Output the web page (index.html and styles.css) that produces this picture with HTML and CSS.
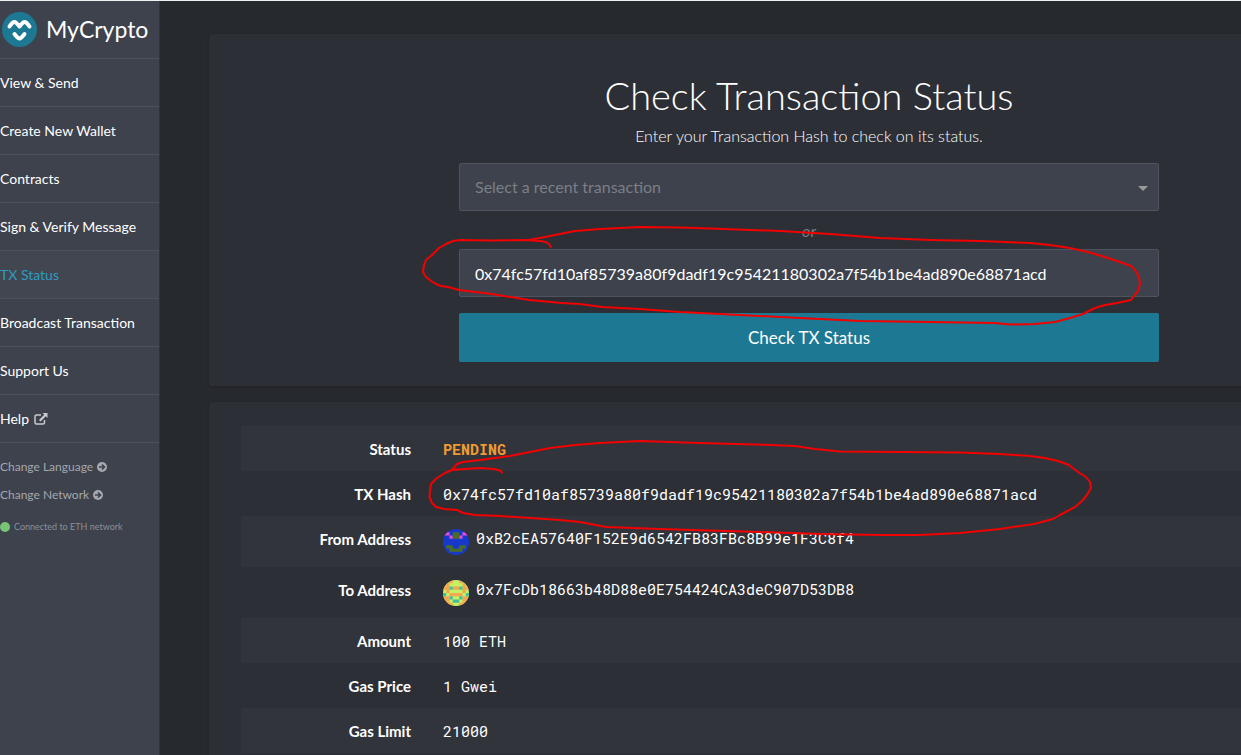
FILE: index.html
```html
<!DOCTYPE html>
<html lang="en">
<head>
<meta charset="utf-8">
<title>MyCrypto - TX Status</title>
<link rel="stylesheet" href="styles.css">
</head>
<body>
<div class="app">
  <aside class="sidebar">
    <a class="logo" href="#">
      <svg class="logo-mark" viewBox="0 0 35 35" aria-hidden="true">
        <circle cx="17.500" cy="17.500" r="17.500" fill="#1d7893"/>
        <path d="M7.500 14.500q3-4.500 5-4.500 1.500 0 5 4.500 3.500-4.500 5-4.500 2 0 5 4.500M12.500 22q3.500 4.500 5 4.500t5-4.500" fill="none" stroke="#fff" stroke-width="4" stroke-linecap="round" stroke-linejoin="round"/>
      </svg>
      <span>MyCrypto</span>
    </a>
    <nav class="nav">
      <a href="#">View &amp; Send</a>
      <a href="#">Create New Wallet</a>
      <a href="#">Contracts</a>
      <a href="#">Sign &amp; Verify Message</a>
      <a class="active" href="#">TX Status</a>
      <a href="#">Broadcast Transaction</a>
      <a href="#">Support Us</a>
      <a href="#">Help
        <svg class="external" viewBox="0 0 14 12" aria-hidden="true"><path d="M7 2H2.500Q1 2 1 3.500v6Q1 11 2.500 11h6.500q1.500 0 1.500-1.500V7" fill="none" stroke="#c8cacd" stroke-width="1.500"/><path d="M8.500 0H13.500V5L11.800 3.300 6.500 8.500 5 7l5.200-5.300z" fill="#c8cacd"/></svg>
      </a>
    </nav>
    <div class="settings">
      <button type="button">Change Language
        <svg viewBox="0 0 10 10" aria-hidden="true"><circle cx="5" cy="5" r="5" fill="#a4a7ac"/><path d="M2 5h5M5 2.500L7.500 5 5 7.500" fill="none" stroke="#3c414c" stroke-width="1.500"/></svg>
      </button>
      <button type="button">Change Network
        <svg viewBox="0 0 10 10" aria-hidden="true"><circle cx="5" cy="5" r="5" fill="#a4a7ac"/><path d="M2 5h5M5 2.500L7.500 5 5 7.500" fill="none" stroke="#3c414c" stroke-width="1.500"/></svg>
      </button>
      <p class="connection"><span class="dot"></span>Connected to ETH network</p>
    </div>
  </aside>

  <main class="content">
    <section class="panel check">
      <h1>Check Transaction Status</h1>
      <p class="lead">Enter your Transaction Hash to check on its status.</p>
      <form class="form">
        <div class="select-wrap">
          <select aria-label="Recent transaction"><option>Select a recent transaction</option></select>
        </div>
        <em class="or">or</em>
        <input type="text" aria-label="Transaction hash" value="0x74fc57fd10af85739a80f9dadf19c95421180302a7f54b1be4ad890e68871acd">
        <button type="button" class="submit">Check TX Status</button>
      </form>
    </section>

    <section class="panel details">
      <table>
        <tbody>
          <tr><th scope="row">Status</th><td><strong class="pending">PENDING</strong></td></tr>
          <tr><th scope="row">TX Hash</th><td>0x74fc57fd10af85739a80f9dadf19c95421180302a7f54b1be4ad890e68871acd</td></tr>
          <tr class="address"><th scope="row">From Address</th><td><div class="account">
            <svg class="identicon" viewBox="0 0 8 8" aria-hidden="true"><path fill="#1639cc" d="M0 0h8v8H0z"/><path fill="#e94be0" d="M0 1h2v1H0zM2 2h1v1H2zM6 1h2v1H6zM5 2h1v1H5z"/><path fill="#4b6c25" d="M3 1h2v2H3zM1 5h2v1h2V5h2v1H6v1H2V6H1z"/></svg>
            <span>0xB2cEA57640F152E9d6542FB83FBc8B99e1F3C8f4</span></div></td></tr>
          <tr class="address"><th scope="row">To Address</th><td><div class="account">
            <svg class="identicon" viewBox="0 0 8 8" aria-hidden="true"><path fill="#c5f263" d="M0 0h8v8H0z"/><path fill="#f5a650" d="M2 0h1v1H2zM5 0h1v1H5zM1 1h1v1H1zM6 1h1v1H6zM0 2h2v1H0zM3 2h2v1H3zM6 2h2v1H6zM1 3h1v1H1zM6 3h1v1H6zM2 4h4v1H2zM0 5h2v2H0zM6 5h2v2H6zM1 7h2v1H1zM5 7h2v1H5z"/><path fill="#46bd9c" d="M2 2h1v1H2zM5 2h1v1H5zM0 4h1v1H0zM7 4h1v1H7zM2 5h1v1H2zM5 5h1v1H5zM3 6h2v1H3z"/></svg>
            <span>0x7FcDb18663b48D88e0E754424CA3deC907D53DB8</span></div></td></tr>
          <tr><th scope="row">Amount</th><td>100 ETH</td></tr>
          <tr><th scope="row">Gas Price</th><td>1 Gwei</td></tr>
          <tr><th scope="row">Gas Limit</th><td>21000</td></tr>
        </tbody>
      </table>
    </section>
  </main>

  <svg class="markup" width="1241" height="755" viewBox="0 0 1241 755" aria-hidden="true">
    <polyline points="551,247 549,244 546,242 540,241 524,240 490,240.500 460,240 453,241 446,244 439,248 432,255 426,260 424,265 423,272 426,277 431,281 436,284 441,286 448,287 459,290 492,294 529,300 562,303 580,304 602,307 640,309 680,312 720,314 800,318 860,321 930,322 995,323 1010,324.500 1035,324 1055,322 1070,318 1083,314 1095,308 1105,305 1117,303 1131,300 1134,296 1138,291 1140,284 1139,277 1135,270 1131,266 1120,262 1105,257 1088,252 1070,248 1050,245 1030,243 980,241 930,240 880,238 830,234 780,231 710,228.500 680,227.500 640,227 600,229 575,231 560,234 545,237 529,240"/>
    <polyline points="502,472.500 500,470.500 494,469 480,468 465,469 452,470 445,473 437,478 431,484 430,490 429.500,497 432,503 436,507 444,509 457,510 463,513 475,515 500,516 560,520 580,522 606,527 660,529 760,532 820,534 880,535 920,535 960,533 1000,529 1034,524 1053,519 1060,515 1075,507 1082,501 1087,495 1091,488 1090,482 1086,477 1078,472 1069,465 1058,461 1045,458 1030,456 1000,454 960,452.500 840,451.500 815,449 795,446 770,445 700,443 640,441 600,443 575,445 550,448 530,452 510,456 480,460 463,462 457,464 452,470"/>
  </svg>
</div>
</body>
</html>
```
FILE: styles.css
```css
* { box-sizing: border-box; }

body {
  margin: 0;
  background: #26292e;
  color: #fff;
  font: 14px/20px Lato, "Open Sans", sans-serif;
}

.app {
  position: relative;
  display: flex;
  min-height: 100vh;
  overflow: hidden;
  border-top: 1px solid #eef3f1;
}

.sidebar {
  flex: 0 0 160px;
  background: #3d424d;
  border-right: 1px solid #2f333a;
}

.logo {
  display: flex;
  align-items: center;
  gap: 9px;
  height: 58px;
  padding-left: 2px;
  border-bottom: 1px solid #4d515c;
  color: #fff;
  font-size: 23px;
  text-decoration: none;
}
.logo-mark { width: 35px; height: 35px; }
.logo span { padding-bottom: 2px; }

.nav a {
  display: flex;
  align-items: center;
  gap: 5px;
  height: 48px;
  border-bottom: 1px solid #4d515c;
  color: #fff;
  text-decoration: none;
}
.nav .active { background: #424651; color: #2e9dc0; }
.external { width: 14px; height: 12px; }

.settings {
  display: flex;
  flex-direction: column;
  align-items: flex-start;
  padding-top: 10px;
}
.settings button {
  display: flex;
  align-items: center;
  gap: 4px;
  height: 28px;
  padding: 0;
  border: 0;
  background: none;
  color: #a4a7ac;
  font: 12px/20px Lato, sans-serif;
}
.settings button svg { width: 10px; height: 10px; }
.connection {
  display: flex;
  align-items: center;
  gap: 4px;
  margin: 8px 0 0;
  color: #8c9097;
  font-size: 9px;
}
.dot { width: 10px; height: 10px; border-radius: 50%; background: #77c477; }

.content {
  display: flex;
  flex: 1 0 1249px;
  flex-direction: column;
  gap: 16px;
  padding: 33px 0 0 49px;
}

.panel {
  background: #2d2f36;
  border-radius: 2px;
  box-shadow: 0 1px 2px #1f2126;
}

.check { padding: 40px 32px 24px; text-align: center; }
.check h1 { margin: 0; font-size: 38px; font-weight: 300; line-height: 42px; }
.lead { margin: 10px 0 17px; font-size: 16px; font-weight: 300; line-height: 20px; }

.form {
  display: flex;
  flex-direction: column;
  max-width: 700px;
  margin: 0 auto;
}
.form select,
.form input {
  width: 100%;
  height: 48px;
  padding: 0 15px;
  border: 1px solid #4d5460;
  border-radius: 2px;
  background: #3d424d;
  color: #fff;
  font: 16px/24px Lato, sans-serif;
}
.form select { appearance: none; color: #7c7f85; }
.select-wrap { position: relative; }
.select-wrap::after {
  position: absolute;
  top: 23px;
  right: 11px;
  border: 5px solid transparent;
  border-top-color: #999;
  border-bottom: 0;
  content: "";
}
.or { height: 38px; padding-top: 10px; color: #7c7f85; font-size: 16px; }
.submit {
  height: 49px;
  margin-top: 16px;
  border: 0;
  border-radius: 2px;
  background: #1d7893;
  color: #fff;
  font: 17px/24px Lato, sans-serif;
}

.details { padding: 24px 32px; }
.details table { width: 100%; border-collapse: collapse; }
.details tr:nth-child(odd) { background: #31343b; }
.details th {
  width: 186px;
  height: 45px;
  padding: 0 16px;
  text-align: right;
  font-size: 15px;
  font-weight: 700;
}
.details td {
  padding: 0 16px;
  font: 15px/20px "Roboto Mono", "Liberation Mono", monospace;
}
.details .address th { height: 51px; padding-bottom: 6px; }
.account { display: flex; align-items: flex-start; gap: 7px; padding-bottom: 2px; }
.account span { padding-top: 2px; }
.identicon { width: 26px; height: 26px; margin-top: 3px; border-radius: 50%; }
.pending { color: #f29b33; }

.markup {
  position: absolute;
  top: -1px;
  left: 0;
  pointer-events: none;
  fill: none;
  stroke: #f30000;
  stroke-width: 2;
  stroke-linecap: round;
  stroke-linejoin: round;
}
```
